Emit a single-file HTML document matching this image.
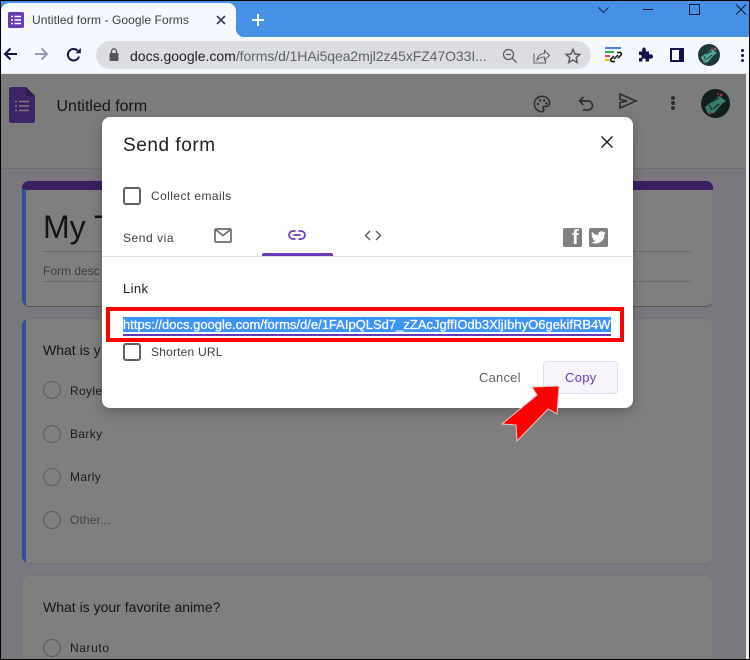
<!DOCTYPE html>
<html>
<head>
<meta charset="utf-8">
<style>
html,body{margin:0;padding:0;width:750px;height:660px;overflow:hidden;background:#000}
*{box-sizing:border-box}
body{font-family:"Liberation Sans",sans-serif;position:relative}
.a{position:absolute;white-space:nowrap}
svg{position:absolute;overflow:visible}
.radio{position:absolute;left:43px;width:18px;height:18px;border:1px solid #5e5e5e;border-radius:50%}
.card{position:absolute;left:21px;width:693px;background:#7f7f7f;border:1px solid #747278;border-radius:8px}
.box{position:absolute;width:18px;height:18px;border:2px solid #5f6368;border-radius:3px;background:#fff}
.opt{left:70px;font-size:12px;line-height:14px;color:#1a1a1a;letter-spacing:.35px}
</style>
</head>
<body>
<!-- chrome -->
<div class="a" style="left:1px;top:1px;width:748px;height:36px;background:#4691e6"></div>
<div class="a" style="left:1px;top:3px;width:235px;height:34px;background:#f5f8fe;border-radius:8px 8px 0 0"></div>
<div class="a" style="left:236px;top:29px;width:8px;height:8px;background:#f5f8fe"></div>
<div class="a" style="left:236px;top:21px;width:16px;height:16px;background:#4691e6;border-radius:0 0 0 8px"></div>
<div class="a" style="left:1px;top:37px;width:748px;height:37px;background:#f5f8fe"></div>
<div class="a" style="left:1px;top:73px;width:748px;height:1px;background:#e4e6ea"></div>

<svg style="left:8px;top:12px" width="16" height="16" viewBox="0 0 16 16"><rect width="16" height="16" rx="1.5" fill="#673ab7"/><path d="M3 4.500h2M3 8h2M3 11.500h2M6.500 4.500h6.500M6.500 8h6.500M6.500 11.500h6.500" stroke="#fff" stroke-width="1.600"/></svg>
<div class="a" style="left:32px;top:12px;font-size:12px;line-height:16px;color:#3c4043;letter-spacing:.08px">Untitled form - Google Forms</div>
<svg style="left:216px;top:15px" width="10" height="10"><path d="M1 1l8 8M9 1l-8 8" stroke="#3c4055" stroke-width="1.700"/></svg>
<svg style="left:252px;top:14px" width="12" height="12"><path d="M6 0v12M0 6h12" stroke="#fff" stroke-width="2"/></svg>

<svg style="left:597px;top:5px" width="14" height="10"><path d="M1.500 2.500l5 5 5-5" fill="none" stroke="#10204a" stroke-width="1"/></svg>
<div class="a" style="left:643px;top:9px;width:10px;height:1px;background:#0a1a3a"></div>
<div class="a" style="left:689px;top:4px;width:11px;height:11px;border:1px solid #0a1a3a"></div>
<svg style="left:735px;top:4px" width="12" height="11"><path d="M1 .5l10 10M11 .5l-10 10" stroke="#0a1a3a" stroke-width="1"/></svg>

<svg style="left:3px;top:47px" width="15" height="14"><path d="M14 7H2M7.500 1.500L2 7l5.500 5.500" fill="none" stroke="#14114a" stroke-width="2"/></svg>
<svg style="left:34px;top:47px" width="15" height="14"><path d="M1 7h12M7.500 1.500L13 7l-5.500 5.500" fill="none" stroke="#9b98bb" stroke-width="2"/></svg>
<svg style="left:66px;top:47px" width="16" height="16" viewBox="0 0 16 16"><path d="M13 9.500A5.700 5.700 0 1 1 11.600 3.700" fill="none" stroke="#14114a" stroke-width="2"/><path d="M9.500 6.300h5.300V1z" fill="#14114a"/></svg>

<div class="a" style="left:96px;top:41px;width:495px;height:28px;background:#dcdde2;border-radius:14px"></div>
<svg style="left:109px;top:48px" width="10" height="13"><rect x="0.500" y="5" width="9" height="8" rx="1" fill="#55565b"/><path d="M2.500 5V3.300a2.500 2.500 0 0 1 5 0V5" fill="none" stroke="#55565b" stroke-width="1.300"/></svg>
<div class="a" style="left:130px;top:48px;font-size:14px;line-height:16px;color:#202124;width:360px;overflow:hidden">docs.google.com<span style="color:#5f6368;letter-spacing:-.08px">/forms/d/1HAi5qea2mjl2z45xFZ47O33I...</span></div>
<svg style="left:502px;top:48px" width="16" height="16"><circle cx="6.500" cy="6.500" r="5" fill="none" stroke="#5a5b60" stroke-width="1.300"/><path d="M4 6.500h5M10.300 10.300l4.200 4.200" stroke="#5a5b60" stroke-width="1.300"/></svg>
<svg style="left:533px;top:48px" width="17" height="16"><path d="M1 5.500v9.500h11.500V11" fill="none" stroke="#66676c" stroke-width="1.100"/><path d="M4 12c.5-4 3.500-6.500 7.500-6.500V2.500l5 5-5 4.500V9C8.500 9 6 10 4 12z" fill="none" stroke="#66676c" stroke-width="1.100"/></svg>
<svg style="left:565px;top:48px" width="16" height="16" viewBox="0 0 16 16"><path d="M8 1.500l2 4.500 4.800.5-3.600 3.200 1 4.800L8 12l-4.200 2.500 1-4.800L1.200 6.500 6 6z" fill="none" stroke="#5a5b60" stroke-width="1.500"/></svg>

<div class="a" style="left:605px;top:47px;width:16px;height:2px;background:#4a86e8"></div>
<div class="a" style="left:605px;top:51px;width:9px;height:2px;background:#34a853"></div>
<div class="a" style="left:605px;top:55px;width:5px;height:2px;background:#ea4335"></div>
<div class="a" style="left:605px;top:59px;width:4px;height:2px;background:#fbbc04"></div>
<svg style="left:609px;top:51px" width="14" height="12"><path d="M8 1.500h3a1.500 1.500 0 0 1 1 2.500L9 7M6 10.500H3A1.500 1.500 0 0 1 2 8l3-3M5 8l4-4" fill="none" stroke="#111" stroke-width="1.500"/></svg>
<svg style="left:638px;top:47px" width="15" height="15" viewBox="0 0 15 15"><path d="M1 4.500h3.200C3.800 1.500 5 .5 6 .5s2.200 1 1.800 4H11v3c2.500-.6 4 .2 4 2s-1.500 2.600-4 2v3H7.500c.6-2.300-.2-3-1.500-3s-2.100.7-1.500 3H1v-3.500c1.800.5 2.800-.3 2.800-1.500S2.800 7.500 1 8z" fill="#14114a"/></svg>
<div class="a" style="left:670px;top:48px;width:14px;height:14px;border:2px solid #14114a;border-right-width:5px;background:#fff"></div>
<svg style="left:698px;top:44px" width="22" height="22" viewBox="0 0 22 22"><circle cx="11" cy="11" r="11" fill="#1d3a3a"/><path d="M3 13l11-8 5 4-3 2-6 7-4 1z" fill="#56a896"/><path d="M8 10l6-3M9 15l5-4M6 12l2 4" stroke="#1d3a3a" stroke-width="1" fill="none"/><circle cx="17" cy="5" r="1.300" fill="#c44"/><circle cx="14" cy="4" r=".8" fill="#c44"/><circle cx="6" cy="17" r="1" fill="#c44"/></svg>
<div class="a" style="left:741px;top:49px;width:3px;height:3px;background:#14114a;border-radius:50%;box-shadow:0 5px 0 #14114a,0 10px 0 #14114a"></div>

<!-- page -->
<div class="a" style="left:1px;top:74px;width:745px;height:585px;background:#7a777e"></div>
<div class="a" style="left:1px;top:74px;width:745px;height:95px;background:#7c7c7c;border-bottom:1px solid #6f6f6f"></div>
<div class="a" style="left:746px;top:74px;width:3px;height:585px;background:#ececec"></div>

<svg style="left:9px;top:87px" width="26" height="36" viewBox="0 0 26 36"><path d="M2.500 0H17l9 9v24.500a2.500 2.500 0 0 1-2.500 2.500h-21A2.500 2.500 0 0 1 0 33.500v-31A2.500 2.500 0 0 1 2.500 0z" fill="#3e2465"/><path d="M17 0l9 9h-9z" fill="#2f1a50"/><path d="M6 14.500h2M6 19h2M6 23.500h2M10 14.500h10M10 19h10M10 23.500h10" stroke="#7c7c7c" stroke-width="1.600"/></svg>
<div class="a" style="left:56.500px;top:97px;font-size:16px;line-height:20px;color:#151515">Untitled form</div>

<svg style="left:533px;top:95px" width="18" height="18" viewBox="0 0 20 20"><path d="M10 1.500a8.500 8.500 0 0 0 0 17c1.300 0 2-.8 2-1.800 0-1.200-.9-1.500-.9-2.500 0-1 .8-1.500 1.800-1.500h2c2 0 3.600-1.500 3.600-3.700 0-4.500-3.800-7.500-8.500-7.500z" fill="none" stroke="#2f2f2f" stroke-width="1.800"/><circle cx="5.500" cy="10" r="1.400" fill="#2f2f2f"/><circle cx="8" cy="6" r="1.400" fill="#2f2f2f"/><circle cx="12.500" cy="6" r="1.400" fill="#2f2f2f"/><circle cx="15" cy="9.500" r="1.400" fill="#2f2f2f"/></svg>
<svg style="left:578px;top:96px" width="16" height="16" viewBox="0 0 16 16"><path d="M5.500 1L1.500 5l4 4" fill="none" stroke="#2f2f2f" stroke-width="1.700"/><path d="M2 5h8a4.500 4.500 0 0 1 0 9H5" fill="none" stroke="#2f2f2f" stroke-width="1.700"/></svg>
<svg style="left:619px;top:93px" width="19" height="16" viewBox="0 0 19 16"><path d="M1 1l16 7-16 7V9.500L8 8 1 6.500z" fill="none" stroke="#2f2f2f" stroke-width="1.700"/></svg>
<div class="a" style="left:671px;top:96px;width:4px;height:4px;background:#2f2f2f;border-radius:50%;box-shadow:0 5px 0 #2f2f2f,0 10px 0 #2f2f2f"></div>
<svg style="left:701px;top:89px" width="29" height="29" viewBox="0 0 29 29"><circle cx="14.500" cy="14.500" r="14.500" fill="#101e1e"/><path d="M4 18L18 7l7 5-4 3-8 9-6 1z" fill="#3c7a6b"/><path d="M10 13l8-4M12 20l6-5M8 16l3 5" stroke="#152a2a" stroke-width="1.200" fill="none"/><circle cx="20" cy="6" r="1.400" fill="#a33"/><circle cx="17" cy="5" r="1" fill="#a33"/><circle cx="9" cy="24" r="1.300" fill="#a33"/></svg>

<!-- cards -->
<div class="card" style="top:180px;height:127px;border-bottom:1px solid #555;overflow:hidden">
  <div class="a" style="left:-1px;top:-1px;width:693px;height:10px;background:#3b1f63"></div>
  <div class="a" style="left:-1px;top:8px;width:5px;height:118px;background:#2f4f96"></div>
  <div class="a" style="left:21px;top:28px;font-size:32px;line-height:36px;color:#141414">My T</div>
  <div class="a" style="left:21px;top:70px;width:649px;height:1px;background:#6c6c6c"></div>
  <div class="a" style="left:21px;top:83px;font-size:12px;line-height:14px;color:#3d3b43">Form desc</div>
  <div class="a" style="left:21px;top:100px;width:649px;height:1px;background:#6c6c6c"></div>
</div>
<div class="card" style="top:318px;height:246px;overflow:hidden">
  <div class="a" style="left:-1px;top:-1px;width:5px;height:247px;background:#2f4f96"></div>
</div>
<div class="a" style="left:43px;top:342px;font-size:14px;line-height:16px;color:#141414">What is y</div>
<div class="radio" style="top:381px"></div><div class="a opt" style="top:384px">Royle</div>
<div class="radio" style="top:425px"></div><div class="a opt" style="top:427px">Barky</div>
<div class="radio" style="top:468px"></div><div class="a opt" style="top:470px">Marly</div>
<div class="radio" style="top:511px"></div><div class="a opt" style="top:513px;color:#444;letter-spacing:.15px">Other...</div>
<div class="card" style="top:575px;height:100px"></div>
<div class="a" style="left:43px;top:599px;font-size:14px;line-height:16px;color:#141414">What is your favorite anime?</div>
<div class="radio" style="top:639px"></div><div class="a opt" style="top:641px;letter-spacing:.6px">Naruto</div>
<div class="a" style="left:0;top:659px;width:750px;height:1px;background:#000"></div>
<div class="a" style="left:0;top:0;width:1px;height:660px;background:#000"></div>
<div class="a" style="left:0;top:0;width:750px;height:1px;background:#000"></div>
<div class="a" style="left:749px;top:0;width:1px;height:660px;background:#000"></div>

<!-- dialog -->
<div class="a" style="left:102px;top:117px;width:531px;height:291px;background:#fff;border-radius:8px;box-shadow:0 4px 12px rgba(0,0,0,.25)"></div>
<div class="a" style="left:123px;top:135px;font-size:19px;line-height:22px;color:#202124;letter-spacing:.55px">Send form</div>
<svg style="left:601px;top:136px" width="12" height="12"><path d="M.5.500l11 11M11.500.500l-11 11" stroke="#202124" stroke-width="1.500"/></svg>
<div class="box" style="left:123px;top:187px"></div>
<div class="a" style="left:151px;top:189px;font-size:12px;line-height:15px;color:#3c4043;letter-spacing:.42px">Collect emails</div>
<div class="a" style="left:123px;top:231px;font-size:12px;line-height:15px;color:#3c4043;letter-spacing:.55px">Send via</div>
<svg style="left:214px;top:228px" width="18" height="15" viewBox="0 0 18 15"><rect x="1" y="1" width="16" height="13" rx="1" fill="none" stroke="#6a6d71" stroke-width="1.700"/><path d="M1.500 1.500L9 7.500l7.500-6" fill="none" stroke="#6a6d71" stroke-width="1.700"/></svg>
<svg style="left:288px;top:230px" width="18" height="10" viewBox="0 0 18 10"><path d="M7.500 1H5a4 4 0 0 0 0 8h2.500M10.500 1H13a4 4 0 0 1 0 8h-2.500M5.500 5h7" fill="none" stroke="#673ab7" stroke-width="1.700"/></svg>
<div class="a" style="left:262px;top:253px;width:71px;height:3px;background:#673ab7;border-radius:2px 2px 0 0"></div>
<svg style="left:364px;top:230px" width="18" height="11" viewBox="0 0 18 11"><path d="M6 1L1.500 5.500 6 10M12 1l4.500 4.500L12 10" fill="none" stroke="#5f6368" stroke-width="1.500"/></svg>
<div class="a" style="left:563px;top:228px;width:19px;height:19px;background:#808080;border-radius:2px"></div>
<div class="a" style="left:572px;top:229px;font-size:20px;line-height:19px;font-weight:bold;color:#fff">f</div>
<div class="a" style="left:589px;top:228px;width:19px;height:19px;background:#808080;border-radius:2px"></div>
<svg style="left:591px;top:231px" width="15" height="13" viewBox="0 0 24 20"><path d="M24 2.400c-.9.400-1.800.700-2.800.800 1-.600 1.800-1.600 2.200-2.700-1 .600-2 1-3.100 1.200A4.900 4.900 0 0 0 11.900 6.200C7.800 6 4.200 4 1.700.900c-1.300 2.200-.7 5.100 1.500 6.600-.8 0-1.600-.2-2.200-.6 0 2.300 1.600 4.500 4 5-.7.200-1.500.2-2.200.1.600 2 2.400 3.400 4.600 3.400A9.900 9.900 0 0 1 0 17.500 14 14 0 0 0 21.500 5c1-.7 1.800-1.600 2.500-2.600z" fill="#fff"/></svg>
<div class="a" style="left:102px;top:256px;width:531px;height:1px;background:#e0e0e0"></div>
<div class="a" style="left:123px;top:281px;font-size:13px;line-height:16px;color:#202124;letter-spacing:.4px">Link</div>

<div class="a" style="left:106px;top:307px;width:518px;height:35px;border:4px solid #f00;background:#fff"></div>
<div class="a" style="left:123px;top:317px;width:488px;height:15px;background:#3b94fb"></div>
<div class="a" style="left:123px;top:317px;width:488px;height:16px;overflow:hidden;font-size:13px;line-height:16px;color:#fff;-webkit-text-stroke:.25px #fff">https://docs.google.com/forms/d/e/1FAIpQLSd7_zZAcJgffIOdb3XljIbhyO6gekifRB4W</div>
<div class="a" style="left:123px;top:334px;width:488px;height:2px;background:#673ab7"></div>

<div class="box" style="left:123px;top:343px"></div>
<div class="a" style="left:151px;top:345px;font-size:12px;line-height:15px;color:#3c4043;letter-spacing:.2px">Shorten URL</div>
<div class="a" style="left:479px;top:370px;font-size:13px;line-height:15px;color:#5f6368;letter-spacing:.2px">Cancel</div>
<div class="a" style="left:543px;top:361px;width:75px;height:33px;background:#f7f4fc;border:1px solid #e3dcf0;border-radius:4px"></div>
<div class="a" style="left:565px;top:370px;font-size:13px;line-height:15px;color:#673ab7;letter-spacing:.3px">Copy</div>

<svg style="left:500px;top:384px" width="62" height="60" viewBox="0 0 62 60"><path d="M32 3L59 2l-2 28-9-5-31 32-1-16-14-1 35-29z" fill="#f00" stroke="#e8c8c8" stroke-width="1"/></svg>
</body>
</html>
